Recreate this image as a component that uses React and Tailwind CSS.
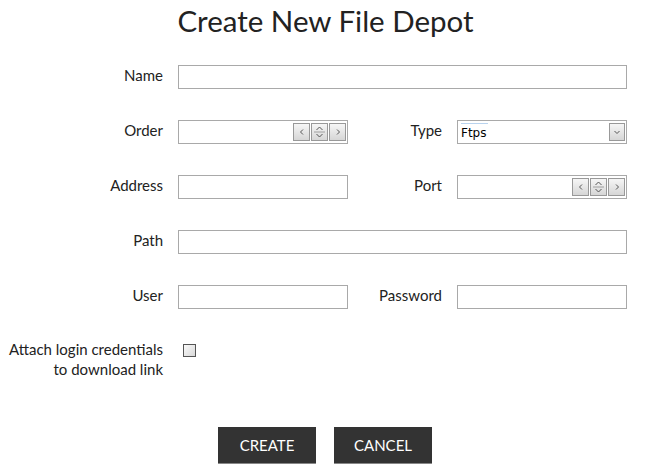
import React from "react";

const font = { fontFamily: "Lato, 'Open Sans', sans-serif" };

const btn =
  "border border-[#999] bg-gradient-to-b from-[#f6f6f6] to-[#d6d6d6] flex items-center justify-center";

function Spinner() {
  return (
    <div className="absolute right-[1px] top-[2px] flex gap-[1px]">
      <div className={`w-[17px] h-[18px] ${btn}`}>
        <svg width="8" height="8" viewBox="0 0 8 8"><path d="M5 1.5 L2.5 4 L5 6.5" fill="none" stroke="#555" strokeWidth="1" /></svg>
      </div>
      <div className={`w-[17px] h-[18px] ${btn}`}>
        <svg width="11" height="16" viewBox="0 0 11 16">
          <path d="M2.5 6 L5.5 3 L8.5 6" fill="none" stroke="#555" strokeWidth="1" />
          <line x1="0" y1="8" x2="11" y2="8" stroke="#a0a0a0" strokeWidth="1" />
          <path d="M2.5 10 L5.5 13 L8.5 10" fill="none" stroke="#555" strokeWidth="1" />
        </svg>
      </div>
      <div className={`w-[17px] h-[18px] ${btn}`}>
        <svg width="8" height="8" viewBox="0 0 8 8"><path d="M3 1.5 L5.5 4 L3 6.5" fill="none" stroke="#555" strokeWidth="1" /></svg>
      </div>
    </div>
  );
}

function Box({ wide, children }) {
  return (
    <div
      className={`relative h-[24px] border border-[#a9a9a9] bg-white ${wide ? "w-[449px]" : "w-[170px]"}`}
    >
      {children}
    </div>
  );
}

function Label({ children, w = "w-[163px]" }) {
  return (
    <div className={`${w} text-right text-[15px] text-[#222] leading-[20px] pb-[4px]`}>{children}</div>
  );
}

export default function App() {
  return (
    <div className="w-[647px] h-[471px] bg-white text-[#222] overflow-hidden" style={font}>
      <h1 className="text-center text-[29.5px] leading-[40px] pt-[1px] text-[#222] pl-[4px]">Create New File Depot</h1>
      <div className="mt-[24px] flex flex-col gap-[31px]">
        <div className="flex items-center gap-[15px]">
          <Label>Name</Label>
          <Box wide />
        </div>
        <div className="flex items-center gap-[15px]">
          <Label>Order</Label>
          <Box>
            <Spinner />
          </Box>
          <Label w="w-[79px]">Type</Label>
          <Box>
            <div className="absolute left-[3px] top-[2px] w-[27px] h-[1px] bg-[#b9d3ee]" />
            <span className="absolute left-[3px] top-[4px] text-[12px] leading-[16px] text-black" style={{ fontFamily: "'DejaVu Sans', sans-serif" }}>Ftps</span>
            <div className={`absolute right-[1px] top-[2px] w-[16px] h-[18px] ${btn}`}>
              <svg width="8" height="8" viewBox="0 0 8 8"><path d="M1.5 3 L4 5.5 L6.5 3" fill="none" stroke="#555" strokeWidth="1" /></svg>
            </div>
          </Box>
        </div>
        <div className="flex items-center gap-[15px]">
          <Label>Address</Label>
          <Box />
          <Label w="w-[79px]">Port</Label>
          <Box>
            <Spinner />
          </Box>
        </div>
        <div className="flex items-center gap-[15px]">
          <Label>Path</Label>
          <Box wide />
        </div>
        <div className="flex items-center gap-[15px]">
          <Label>User</Label>
          <Box />
          <Label w="w-[79px]">Password</Label>
          <Box />
        </div>
        <div className="flex items-start gap-[20px] -mt-[1px]">
          <div className="w-[163px] text-right text-[15px] text-[#222] leading-[20px]">
            Attach login credentials
            <br />
            to download link
          </div>
          <div className="mt-[5px] w-[13px] h-[13px] border border-[#555] bg-gradient-to-br from-[#fafafa] to-[#d8d8d8]" />
        </div>
      </div>
      <div className="mt-[48px] flex justify-center gap-[18px] pl-[3px]">
        <button className="w-[98px] h-[37px] bg-[#333] text-white text-[15px] border-b border-[#888]">CREATE</button>
        <button className="w-[98px] h-[37px] bg-[#333] text-white text-[15px] border-b border-[#888]">CANCEL</button>
      </div>
    </div>
  );
}
